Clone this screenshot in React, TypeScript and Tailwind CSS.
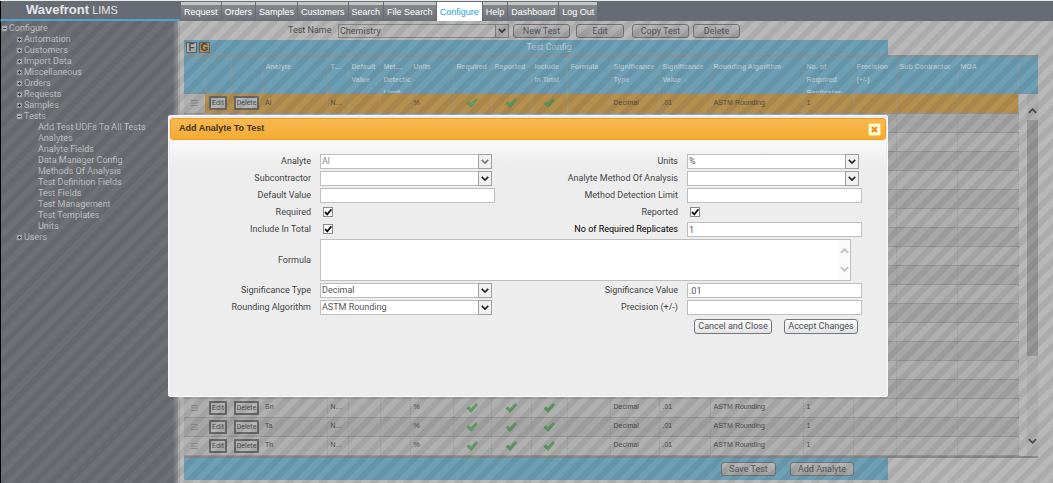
import type { ReactNode } from 'react'
import clsx from 'clsx'

const NAV = ['Request', 'Orders', 'Samples', 'Customers', 'Search', 'File Search', 'Configure', 'Help', 'Dashboard', 'Log Out']

const TREE = [
  { label: 'Automation' },
  { label: 'Customers' },
  { label: 'Import Data' },
  { label: 'Miscellaneous' },
  { label: 'Orders' },
  { label: 'Requests' },
  { label: 'Samples' },
  {
    label: 'Tests',
    children: [
      'Add Test UDFs To All Tests',
      'Analytes',
      'Analyte Fields',
      'Data Manager Config',
      'Methods Of Analysis',
      'Test Definition Fields',
      'Test Fields',
      'Test Management',
      'Test Templates',
      'Units',
    ],
  },
  { label: 'Users' },
]

const COLUMNS = [
  { width: 'w-[21px]', lines: [] },
  { width: 'w-[26px]', lines: [] },
  { width: 'w-[31px]', lines: [] },
  { width: 'w-[65px]', lines: ['Analyte'] },
  { width: 'w-[21px]', lines: ['T…'] },
  { width: 'w-[32px]', lines: ['Default', 'Value'] },
  { width: 'w-[30px]', lines: ['Met…', 'Detectio', 'Limit'] },
  { width: 'w-[43px]', lines: ['Units'] },
  { width: 'w-[38px]', lines: ['Required'] },
  { width: 'w-[40px]', lines: ['Reported'] },
  { width: 'w-[36px]', lines: ['Include', 'In Total'] },
  { width: 'w-[43px]', lines: ['Formula'] },
  { width: 'w-[49px]', lines: ['Significance', 'Type'] },
  { width: 'w-[51px]', lines: ['Significance', 'Value'] },
  { width: 'w-[93px]', lines: ['Rounding Algorithm'] },
  { width: 'w-[50px]', lines: ['No. of', 'Required', 'Replicates'] },
  { width: 'w-[43px]', lines: ['Precision', '(+/-)'] },
  { width: 'w-[61px]', lines: ['Sub Contractor'] },
  { width: 'w-[61px]', lines: ['MOA'] },
]

const ROWS = ['Al', ...Array<string>(15).fill(''), 'Sn', 'Ta', 'Th']

function Chevron({ up = false, className }: { up?: boolean; className?: string }) {
  return (
    <svg viewBox="0 0 10 6" fill="none" stroke="currentColor" strokeWidth="2" className={className} aria-hidden="true">
      <path d={up ? 'M1 5l4-4 4 4' : 'M1 1l4 4 4-4'} />
    </svg>
  )
}

function GreenTick() {
  return (
    <svg viewBox="0 0 12 10" className="h-[10px] w-[12px]" aria-hidden="true">
      <path d="M.8 5.6L3 3.7l2 2L10 .6l1.6 1.3L5.2 9.4z" fill="#62a064" stroke="#4f8a55" strokeWidth=".5" />
    </svg>
  )
}

function TreeBox({ open = false }: { open?: boolean }) {
  return (
    <svg viewBox="0 0 7 7" className="size-[7px] shrink-0" aria-hidden="true">
      <path d="M1 1h5v5H1z" fill="#b6b8b9" stroke="#8b8e91" strokeWidth=".6" />
      <path d={open ? 'M2 3.5h3' : 'M2 3.5h3M3.5 2v3'} stroke="#3f4245" />
    </svg>
  )
}

function Sidebar() {
  return (
    <nav className="w-[180px] shrink-0 border-r-2 border-l border-l-black border-r-[#a9abad] bg-[#6f7378] bg-linear-to-r from-[#6f7378] from-97% to-[#94979a] text-[9px] leading-[11px] text-[#c4c6c8]">
      <ul className="pt-[2px]">
        <li>
          <a href="#configure" className="flex items-center gap-px"><TreeBox open />Configure</a>
          <ul className="pl-[15px]">
            {TREE.map((node) => (
              <li key={node.label}>
                <a href="#tree" className="flex items-center gap-px"><TreeBox open={!!node.children} />{node.label}</a>
                {node.children && (
                  <ul className="pl-[22px]">
                    {node.children.map((child) => (
                      <li key={child}><a href="#tree" className="block whitespace-nowrap">{child}</a></li>
                    ))}
                  </ul>
                )}
              </li>
            ))}
          </ul>
        </li>
      </ul>
    </nav>
  )
}

function DimButton({ children, className }: { children: ReactNode; className?: string }) {
  return (
    <button
      type="button"
      className={clsx('h-[14px] rounded-[3px] border border-[#72757a] bg-linear-to-b from-[#bcbcbc] to-[#a4a4a4] text-center leading-[12px] whitespace-nowrap text-[#55585c]', className)}
    >
      {children}
    </button>
  )
}

function RowButton({ children }: { children: ReactNode }) {
  return (
    <button type="button" className="mx-auto block h-[14px] border-2 border-[#6a6a6a] bg-[#b8b8b8] px-px font-['Roboto',sans-serif] text-[7px] leading-[10px] text-[#4a4a4a]">
      {children}
    </button>
  )
}

function Columns() {
  return (
    <colgroup>
      {COLUMNS.map((column, i) => <col key={i} className={column.width} />)}
    </colgroup>
  )
}

function TestGrid() {
  return (
    <div className="mr-[15px] font-['Liberation_Sans',Arial,sans-serif] text-[7px]">
      <div className="flex h-[39px] overflow-hidden border-t-2 border-b border-[#8f9698] bg-[#6fa3b9]">
        <table className="w-full flex-1 table-fixed">
          <Columns />
          <thead>
            <tr>
              {COLUMNS.map((column, i) => (
                <th key={i} className="h-[37px] border-r border-[#8b9da5] p-0 text-left align-top font-bold text-[#b8cad1]">
                  <div className="h-[36px] overflow-hidden pt-[3px] pl-[3px] leading-[13px] whitespace-nowrap">
                    {column.lines.map((line) => <div key={line}>{line}</div>)}
                  </div>
                </th>
              ))}
            </tr>
          </thead>
        </table>
        <div className="w-[20px] shrink-0" />
      </div>
      <div className="flex border-r border-b-2 border-[#8c8c8c]">
        <table className="w-full flex-1 table-fixed text-[#4d4d4d]">
          <Columns />
          <tbody>
            {ROWS.map((name, i) => (
              <tr key={i} className={clsx('h-[19px]', i === 0 ? 'bg-[#b99250]' : i % 2 ? 'bg-[#aaa]' : 'bg-[#b3b3b3]')}>
                <td className={clsx('border-b border-[#999] p-0', i === 0 && 'bg-[#b3b3b3]')}>
                  {name && (
                    <svg viewBox="0 0 7 6" className="mx-auto h-[6px] w-[7px]" stroke="#858585" aria-hidden="true">
                      <path d="M0 .5h7M0 3h7M0 5.5h7" strokeWidth=".8" />
                    </svg>
                  )}
                </td>
                <td className="border-b border-[#999] p-0">{name && <RowButton>Edit</RowButton>}</td>
                <td className="border-b border-[#999] p-0">{name && <RowButton>Delete</RowButton>}</td>
                {COLUMNS.slice(3).map((_, j) => (
                  <td key={j} className="border-r border-b border-r-[#9f9f9f] border-b-[#999] p-0 pl-[3px] whitespace-nowrap [border-right-style:dotted]">
                    {name && (j >= 5 && j <= 7
                      ? <div className="flex justify-center pr-[4px]"><GreenTick /></div>
                      : [name, 'N…', '', '', '%', '', '', '', '', 'Decimal', '.01', 'ASTM Rounding', '1', '', '', ''][j])}
                  </td>
                ))}
              </tr>
            ))}
          </tbody>
        </table>
        {/* scroll bar */}
        <div className="ml-[8px] flex w-[11px] shrink-0 flex-col items-center bg-[#b4b4b4] text-[#4c4c4c]">
          <Chevron up className="mt-[14px] mb-[6px] h-[6px] w-[9px]" />
          <div className="h-[236px] w-full bg-[#9a9a9a]" />
          <Chevron className="mt-auto mb-[12px] h-[6px] w-[9px]" />
        </div>
      </div>
    </div>
  )
}

function ArrowBox({ disabled, dim }: { disabled?: boolean; dim?: boolean }) {
  return (
    <span
      className={clsx(
        'pointer-events-none absolute inset-y-0 right-0 flex w-[14px] items-center justify-center border',
        dim ? 'border-[#808080] bg-[#b0b0b0] text-[#3c3c3c]' : 'border-[#a0a0a0] bg-[#f0f0f0]',
        !dim && (disabled ? 'text-[#777]' : 'text-[#222]'),
      )}
    >
      <Chevron className="h-[5px] w-[8px]" />
    </span>
  )
}

const label = 'text-right whitespace-nowrap text-[#444]'
const field = 'h-[15px] w-full rounded-none border border-[#bfbfbf] bg-white pl-px text-[#555] outline-none'

function SelectField({ id, text, value, disabled }: { id: string; text: string; value: string; disabled?: boolean }) {
  return (
    <>
      <label htmlFor={id} className={label}>{text}</label>
      <div className="relative mr-[3px]">
        <select id={id} disabled={disabled} className={clsx(field, 'block appearance-none', disabled && 'text-[#888]')}>
          <option>{value}</option>
        </select>
        <ArrowBox disabled={disabled} />
      </div>
    </>
  )
}

function TextField({ id, text, value = '', strong }: { id: string; text: string; value?: string; strong?: boolean }) {
  return (
    <>
      <label htmlFor={id} className={clsx('text-right whitespace-nowrap', strong ? 'text-black' : 'text-[#444]')}>{text}</label>
      <input id={id} type="text" defaultValue={value} className={field} />
    </>
  )
}

function CheckField({ id, text }: { id: string; text: string }) {
  return (
    <>
      <label htmlFor={id} className={label}>{text}</label>
      <div className="relative h-[15px] pl-[3px]">
        <input id={id} type="checkbox" defaultChecked className="peer mt-[2px] block size-[10px] appearance-none border border-[#8a8a8a] bg-white" />
        <svg viewBox="0 0 10 10" className="pointer-events-none absolute top-[2px] left-[3px] hidden size-[10px] peer-checked:block" aria-hidden="true">
          <path d="M2 5l2.3 2.3L8.4 2.2" fill="none" stroke="#111" strokeWidth="1.8" />
        </svg>
      </div>
    </>
  )
}

function AnalyteDialog() {
  const button = 'h-[15px] rounded-[3px] border border-[#6f7680] bg-linear-to-b from-white to-[#e2e2e2] leading-[13px] whitespace-nowrap text-[#4b4f55]'
  return (
    <div role="dialog" aria-labelledby="dialog-title" className="h-[282px] w-[720px] max-w-full rounded-[2px] border border-[#f8f8f8] bg-[#ededed] p-px">
      <div className="mt-px flex h-[22px] items-center justify-between rounded-[3px] border border-[#ee9d25] bg-linear-to-b from-[#f9b850] to-[#f6ab32] pr-[4px] pl-[8px]">
        <h2 id="dialog-title" className="font-['Liberation_Sans',Arial,sans-serif] text-[9px] font-bold text-[#3d3523]">Add Analyte To Test</h2>
        <button type="button" aria-label="Close" className="flex size-[13px] items-center justify-center rounded-[2px] border border-[#fbd850] bg-[#fdf8e0]">
          <svg viewBox="0 0 8 8" className="size-[7px]" aria-hidden="true">
            <path d="M1.2 1.2l5.6 5.6M6.8 1.2L1.2 6.8" stroke="#ef8c08" strokeWidth="2.4" />
          </svg>
        </button>
      </div>
      <form className="bg-linear-to-b from-[#fafafa] to-[#ededed] to-[24px] pt-[14px] pr-[24px] text-[9px] leading-[13px]">
        <div className="grid grid-cols-[141px_1fr_174px_1fr] items-center gap-x-[9px] gap-y-[2px]">
          <SelectField id="analyte" text="Analyte" value="Al" disabled />
          <SelectField id="units" text="Units" value="%" />
          <SelectField id="subcontractor" text="Subcontractor" value="" />
          <SelectField id="method" text="Analyte Method Of Analysis" value="" />
          <TextField id="default-value" text="Default Value" />
          <TextField id="detection-limit" text="Method Detection Limit" />
          <CheckField id="required" text="Required" />
          <CheckField id="reported" text="Reported" />
          <CheckField id="in-total" text="Include In Total" />
          <TextField id="replicates" text="No of Required Replicates" value="1" strong />
          <label htmlFor="formula" className={label}>Formula</label>
          <div className="relative col-span-3 mr-[11px]">
            <textarea id="formula" className="block h-[42px] w-full resize-none border border-[#bfbfbf] bg-white outline-none" />
            <div className="pointer-events-none absolute inset-y-px right-px flex w-[12px] flex-col items-center justify-between bg-[#fafafa] py-[8px] text-[#bdbdbd]">
              <Chevron up className="h-[6px] w-[9px]" />
              <Chevron className="h-[6px] w-[9px]" />
            </div>
          </div>
          <SelectField id="significance-type" text="Significance Type" value="Decimal" />
          <TextField id="significance-value" text="Significance Value" value=".01" />
          <SelectField id="rounding" text="Rounding Algorithm" value="ASTM Rounding" />
          <TextField id="precision" text="Precision (+/-)" />
        </div>
        <div className="mt-[4px] mr-[4px] flex justify-end gap-[12px]">
          <button type="button" className={clsx(button, 'w-[78px]')}>Cancel and Close</button>
          <button type="button" className={clsx(button, 'w-[74px]')}>Accept Changes</button>
        </div>
      </form>
    </div>
  )
}

export default function App() {
  return (
    <div className="flex min-h-screen flex-col bg-[#bcbcbc] font-['Roboto','Liberation_Sans',sans-serif] text-[9px]">
      <header className="flex h-[21px] border-t border-[#e8ece6] bg-[#666b74]">
        <div className="w-[180px] shrink-0 border-b-2 border-l border-b-[#4fa3d0] border-l-black pl-[25px] font-['Liberation_Sans',Arial,sans-serif] text-[11px] leading-[18px] text-[#e4e6e8]">
          <span className="text-[13px] font-bold">Wavefront</span> LIMS
        </div>
        <nav className="flex gap-px pt-px pl-px font-['Liberation_Sans',Arial,sans-serif] text-[9px] leading-[15px]">
          {NAV.map((item) => (
            <a
              key={item}
              href="#nav"
              className={clsx(
                'border-t-3 px-[3px] whitespace-nowrap',
                item === 'Configure' ? 'border-white bg-white text-[#1ba1e2]' : 'border-[#c3c6c4] bg-linear-to-b from-[#85888d] to-[#6c7077] text-white',
              )}
            >
              {item}
            </a>
          ))}
        </nav>
      </header>

      <div className="relative flex flex-1">
        <Sidebar />
        <main className="min-w-0 flex-1 pl-[4px]">
          <div className="flex h-[19px] items-center pl-[104px] text-[#505050]">
            <label htmlFor="test-name" className="w-[50px]">Test Name</label>
            <div className="relative w-[171px]">
              <select id="test-name" className="block h-[14px] w-full appearance-none border border-[#8b8b8b] bg-transparent pl-px leading-[12px]">
                <option>Chemistry</option>
              </select>
              <ArrowBox dim />
            </div>
            <DimButton className="ml-[4px] w-[57px]">New Test</DimButton>
            <DimButton className="ml-[6px] w-[48px]">Edit</DimButton>
            <DimButton className="ml-[8px] w-[57px]">Copy Test</DimButton>
            <DimButton className="ml-[4px] w-[47px]">Delete</DimButton>
          </div>

          <div className="flex h-[15px] w-[704px] max-w-full items-center bg-[#6fa3b9] pl-[2px]">
            <div className="flex gap-[2px] font-['Liberation_Sans',Arial,sans-serif] text-[10px] leading-[9px] font-bold text-[#4a4a4a]">
              <button type="button" className="size-[11px] border border-[#666] bg-[#b8b8b8]">F</button>
              <button type="button" className="size-[11px] border border-[#666] bg-[#b99250]">G</button>
            </div>
            <div className="flex-1 text-center text-[9px] text-[#bccdd4]">Test Config</div>
          </div>

          <TestGrid />

          <div className="flex h-[22px] w-[704px] max-w-full items-center justify-end gap-[14px] bg-[#6fa3b9] pr-[34px]">
            <DimButton className="w-[55px]">Save Test</DimButton>
            <DimButton className="w-[64px]">Add Analyte</DimButton>
          </div>
        </main>

        {/* striped modal backdrop */}
        <div className="absolute inset-0 flex items-start justify-center bg-[repeating-linear-gradient(135deg,rgba(0,0,0,0.09)_0_5px,rgba(0,0,0,0.02)_6px_11px,rgba(0,0,0,0.09)_12px)] pt-[94px] pl-[3px]">
          <AnalyteDialog />
        </div>
      </div>
    </div>
  )
}
